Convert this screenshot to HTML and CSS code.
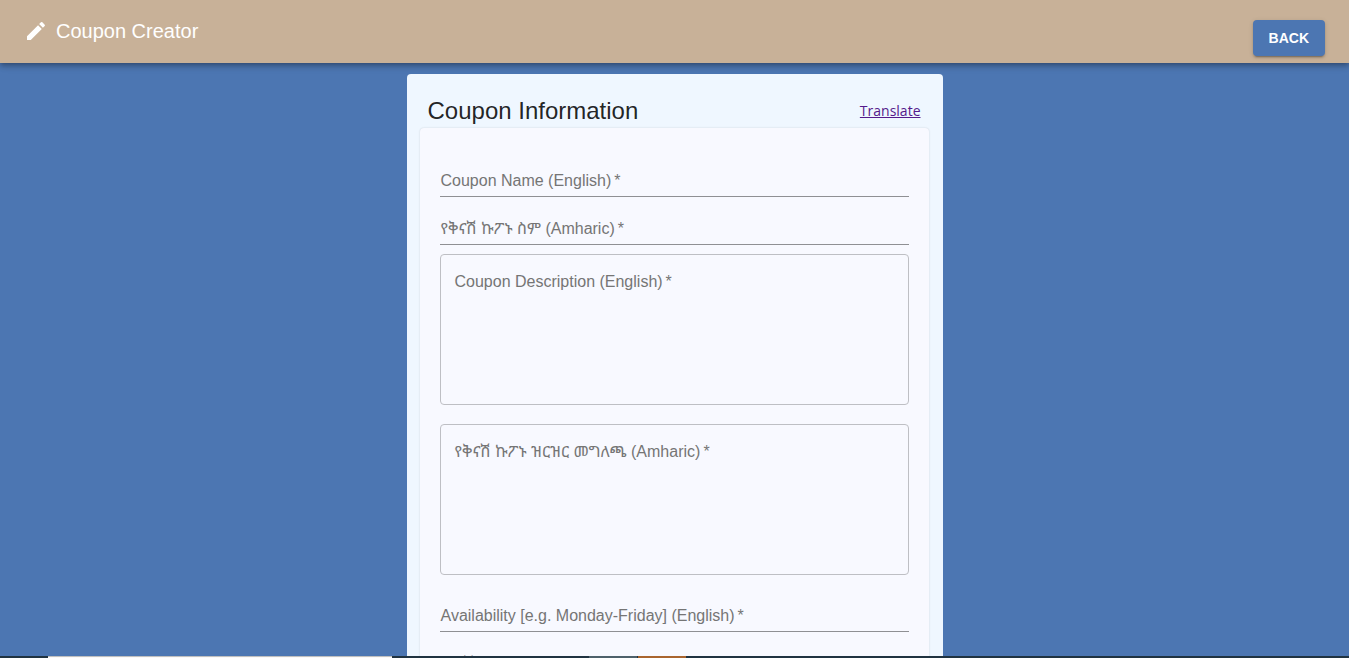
FILE: index.html
```html
<!DOCTYPE html>
<html lang="en">
<head>
<meta charset="utf-8">
<meta name="viewport" content="width=device-width, initial-scale=1">
<title>Coupon Creator</title>
<link rel="stylesheet" href="styles.css">
</head>
<body>
<header class="appbar">
  <div class="brand">
    <svg class="brand-icon" viewBox="0 0 24 24" aria-hidden="true"><path d="M3 17.25V21h3.75L17.81 9.94l-3.75-3.75L3 17.25zM20.71 7.04c.39-.39.39-1.02 0-1.41l-2.34-2.34a.9959.9959 0 0 0-1.41 0l-1.83 1.83 3.75 3.75 1.83-1.83z"/></svg>
    <h1 class="brand-title">Coupon Creator</h1>
  </div>
  <button class="back" type="button">BACK</button>
</header>
<main class="card">
  <div class="card-head">
    <h2 class="card-title">Coupon Information</h2>
    <a class="translate" href="#translate">Translate</a>
  </div>
  <form class="paper">
    <div class="field">
      <input class="line-input" id="name-en" type="text" required>
      <label class="label" for="name-en">Coupon Name (English)<span class="star">*</span></label>
    </div>
    <div class="field">
      <input class="line-input" id="name-am" type="text" required>
      <label class="label" for="name-am">የቅናሽ ኩፖኑ ስም (Amharic)<span class="star">*</span></label>
    </div>
    <div class="field field-area">
      <textarea class="area-input" id="desc-en" required></textarea>
      <label class="label label-area" for="desc-en">Coupon Description (English)<span class="star">*</span></label>
    </div>
    <div class="field field-area">
      <textarea class="area-input" id="desc-am" required></textarea>
      <label class="label label-area" for="desc-am">የቅናሽ ኩፖኑ ዝርዝር መግለጫ (Amharic)<span class="star">*</span></label>
    </div>
    <div class="field">
      <input class="line-input" id="days-en" type="text" required>
      <label class="label" for="days-en">Availability [e.g. Monday-Friday] (English)<span class="star">*</span></label>
    </div>
    <div class="field">
      <input class="line-input" id="days-am" type="text" required>
      <label class="label" for="days-am">የሚሸጥበት ቀን [ለምሳሌ ከሰኞ እስከ ዓርብ] (Amharic)<span class="star">*</span></label>
    </div>
  </form>
</main>
<div class="taskbar" aria-hidden="true">
  <span class="task-search"></span>
  <span class="task-active"></span>
  <span class="task-alert"></span>
</div>
</body>
</html>
```
FILE: styles.css
```css
* { box-sizing: border-box; }

html { scrollbar-width: none; }

body {
  margin: 0;
  min-height: 100vh;
  background: #4c76b2;
  color: rgba(0, 0, 0, 0.87);
  font-family: "Liberation Sans", Arial, "Noto Sans Ethiopic", sans-serif;
  font-size: 16px;
}

.appbar {
  display: flex;
  justify-content: space-between;
  align-items: flex-start;
  padding: 19px 24px 7px;
  background: #c8b198;
  box-shadow: 0 2px 4px -1px rgba(0, 0, 0, 0.2), 0 4px 5px rgba(0, 0, 0, 0.14), 0 1px 10px rgba(0, 0, 0, 0.12);
}

.brand { display: flex; align-items: center; gap: 8px; }
.brand-icon { width: 24px; height: 24px; fill: #fff; }
.brand-title { margin: 0; color: #fff; font-size: 20px; line-height: 24px; font-weight: 400; }

.back {
  margin-top: 1px;
  padding: 6px 16px;
  border: 0;
  border-radius: 4px;
  background: #4c76b2;
  color: #fff;
  font: 600 14px/24px "Liberation Sans", Arial, sans-serif;
  box-shadow: 0 3px 1px -2px rgba(0, 0, 0, 0.2), 0 2px 2px rgba(0, 0, 0, 0.14), 0 1px 5px rgba(0, 0, 0, 0.12);
}

.card {
  width: 100%;
  max-width: 536px;
  margin: 11px auto 0;
  padding: 21px 14px 21px 13px;
  border-radius: 4px;
  background: #eff7ff;
}

.card-head {
  display: flex;
  justify-content: space-between;
  align-items: center;
  padding: 0 8px 1px;
}
.card-title { margin: 0; font-size: 24px; line-height: 32px; font-weight: 400; }
.translate { color: #551a8b; font-family: "Segoe UI", "Open Sans", sans-serif; font-size: 14px; line-height: 24px; }

.paper {
  padding: 21px 20px;
  border-radius: 4px;
  background: #f8f9ff;
  box-shadow: 0 0 2px rgba(0, 0, 0, 0.16);
}

.field { position: relative; }
.field-area { margin: 9px 0 19px; }
.field-area + .field { margin-top: 9px; }
.field-area + .field-area { margin: 19px 0 9px; }

.line-input {
  display: block;
  width: 100%;
  height: 48px;
  padding: 16px 0 0;
  border: 0;
  border-bottom: 1px solid #8f9094;
  background: transparent;
  font: inherit;
}

.area-input {
  display: block;
  width: 100%;
  height: 151px;
  padding: 18px 14px;
  border: 1px solid #bebfc4;
  border-radius: 4px;
  background: transparent;
  font: inherit;
  resize: none;
}

/* Resting labels lie over their empty inputs. */
.label {
  position: absolute;
  top: 24px;
  left: 1px;
  color: #757575;
  line-height: 16px;
  white-space: nowrap;
  pointer-events: none;
}
.label-area { top: 20px; left: 15px; }
.star { margin-left: 3px; }

.taskbar {
  position: fixed;
  inset: auto 0 0;
  display: grid;
  grid-template-columns: 48px 344px 197px 48px 1px 48px;
  height: 2px;
  background: #203341;
}
.task-search { grid-column: 2; background: #fbf9f8; border-top: 1px solid #c0c0c0; }
.task-active { grid-column: 4; background: #4e616b; }
.task-alert { grid-column: 6; background: #a9652f; }
```
